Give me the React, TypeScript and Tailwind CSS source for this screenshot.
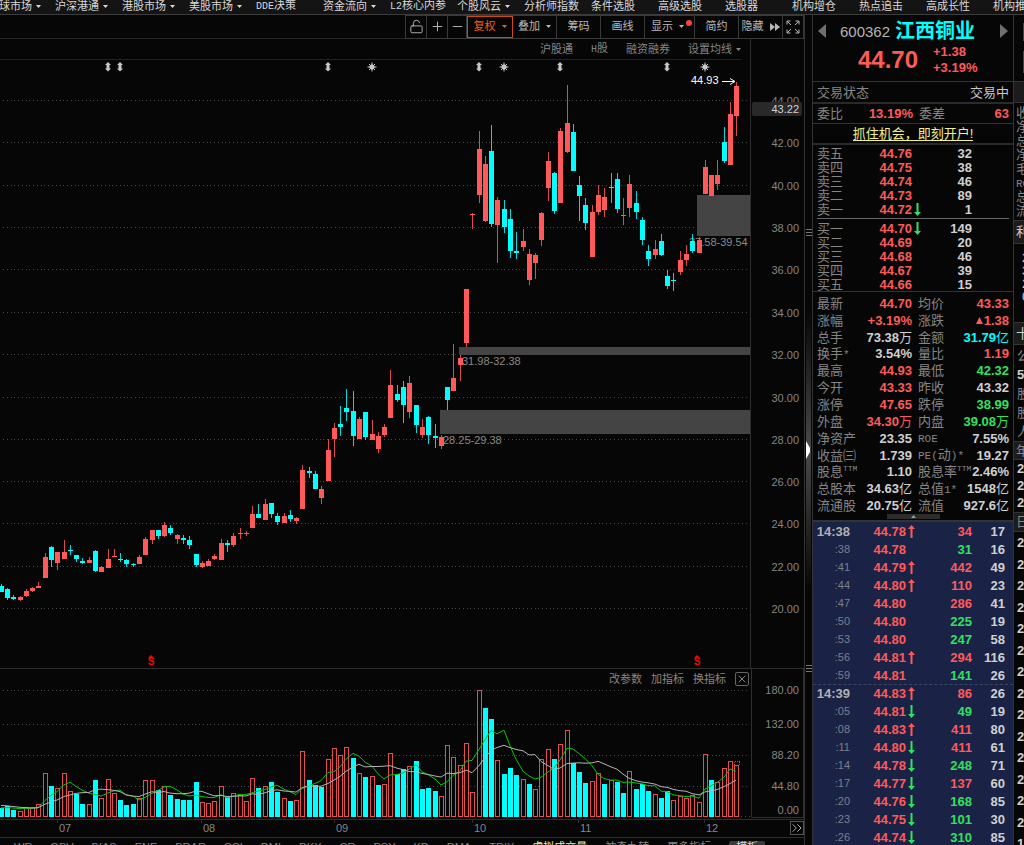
import { useState } from 'react';
import clsx from 'clsx';
import { ChevronsRight, Minus, Plus, LockOpen, X } from 'lucide-react';

type Color = 'r' | 'c' | 'g' | 'w' | 'b';

const RED = '#ff5a5a';
const CYAN = '#00ffff';

// candle colour, high, body top, body bottom, low, volume colour, volume top
type Candle = [string, number, number, number, number, string, number];

const CANDLES: Candle[] = [
  ['c', 584, 586, 592, 592, 'c', 808], ['c', 588, 589, 598, 600, 'c', 806], ['c', 595, 597, 599, 600, 'c', 810],
  ['r', 596, 597, 600, 601, 'r', 811], ['r', 589, 591, 596, 597, 'r', 807], ['r', 587, 588, 591, 592, 'r', 807],
  ['r', 582, 586, 588, 588, 'r', 804], ['r', 553, 557, 578, 578, 'r', 773], ['c', 546, 547, 560, 567, 'c', 786],
  ['r', 552, 552, 563, 570, 'r', 788], ['r', 540, 552, 559, 559, 'r', 773], ['c', 545, 550, 551, 555, 'r', 791],
  ['c', 555, 555, 559, 562, 'c', 794], ['c', 558, 561, 563, 564, 'c', 804], ['r', 557, 560, 563, 563, 'r', 804],
  ['c', 550, 551, 571, 572, 'c', 780], ['r', 566, 567, 572, 572, 'r', 798], ['r', 549, 559, 568, 568, 'r', 779],
  ['r', 549, 556, 557, 557, 'r', 793], ['c', 553, 559, 560, 562, 'c', 800], ['c', 559, 560, 564, 567, 'c', 805],
  ['c', 563, 564, 565, 567, 'c', 804], ['r', 555, 557, 564, 564, 'r', 798], ['r', 537, 539, 555, 555, 'r', 780],
  ['r', 530, 530, 540, 544, 'r', 780], ['c', 530, 530, 536, 539, 'c', 790], ['r', 522, 525, 536, 537, 'r', 786],
  ['c', 525, 528, 533, 535, 'c', 795], ['r', 534, 535, 539, 544, 'c', 799], ['c', 535, 538, 540, 544, 'c', 800],
  ['c', 536, 540, 545, 549, 'c', 800], ['c', 554, 554, 565, 567, 'c', 782], ['r', 561, 563, 567, 568, 'r', 802],
  ['r', 559, 561, 566, 566, 'r', 803], ['r', 554, 556, 559, 560, 'r', 801], ['r', 539, 543, 560, 560, 'r', 786],
  ['c', 540, 543, 545, 552, 'c', 797], ['r', 533, 536, 545, 547, 'r', 793], ['r', 528, 533, 534, 539, 'r', 795],
  ['r', 531, 533, 534, 536, 'r', 801], ['r', 506, 514, 528, 528, 'r', 778], ['c', 504, 514, 518, 518, 'c', 788],
  ['r', 499, 504, 520, 520, 'r', 786], ['c', 503, 503, 514, 518, 'c', 782], ['c', 513, 516, 522, 525, 'c', 792],
  ['r', 513, 516, 523, 523, 'r', 798], ['c', 510, 515, 519, 522, 'c', 801], ['r', 517, 518, 521, 524, 'r', 800],
  ['r', 465, 470, 509, 509, 'r', 751], ['c', 467, 471, 473, 478, 'c', 780], ['c', 471, 474, 489, 489, 'c', 785],
  ['r', 486, 489, 498, 504, 'c', 787], ['r', 439, 450, 481, 481, 'r', 759], ['r', 423, 428, 439, 457, 'r', 748],
  ['c', 406, 424, 427, 436, 'r', 755], ['c', 389, 408, 412, 421, 'r', 747], ['c', 391, 411, 436, 446, 'c', 758],
  ['r', 417, 419, 439, 439, 'r', 773], ['c', 412, 412, 437, 440, 'c', 777], ['r', 420, 434, 440, 440, 'r', 776],
  ['r', 432, 436, 449, 453, 'c', 785], ['r', 424, 427, 435, 437, 'r', 784], ['r', 370, 385, 418, 418, 'r', 753],
  ['c', 385, 394, 400, 402, 'c', 774], ['c', 381, 387, 405, 423, 'c', 769], ['r', 376, 383, 412, 418, 'r', 766],
  ['c', 405, 405, 425, 433, 'c', 761], ['r', 419, 427, 435, 438, 'c', 789], ['c', 416, 417, 435, 444, 'c', 788],
  ['c', 424, 436, 438, 448, 'c', 791], ['r', 435, 437, 446, 449, 'r', 796], ['c', 387, 387, 400, 410, 'r', 745],
  ['r', 344, 378, 391, 391, 'r', 757], ['r', 355, 358, 365, 381, 'r', 765], ['r', 289, 289, 343, 347, 'r', 743],
  ['r', 213, 214, 215, 229, 'r', 792], ['r', 131, 149, 195, 203, 'r', 690], ['r', 156, 164, 221, 222, 'c', 708],
  ['c', 125, 151, 224, 227, 'c', 719], ['r', 197, 200, 225, 263, 'r', 760], ['c', 200, 209, 227, 233, 'c', 774],
  ['c', 209, 219, 251, 258, 'c', 768], ['c', 232, 251, 253, 259, 'c', 775], ['r', 229, 241, 247, 251, 'r', 779],
  ['r', 249, 254, 280, 285, 'c', 784], ['r', 253, 255, 263, 279, 'r', 789], ['r', 212, 213, 240, 246, 'r', 759],
  ['r', 152, 161, 188, 201, 'r', 749], ['c', 172, 173, 211, 214, 'c', 759], ['r', 128, 131, 203, 203, 'r', 744],
  ['r', 85, 123, 152, 153, 'r', 730], ['c', 124, 132, 171, 171, 'c', 763], ['c', 176, 185, 196, 221, 'c', 772],
  ['c', 198, 205, 223, 230, 'c', 783], ['r', 205, 212, 257, 257, 'r', 781], ['r', 185, 195, 212, 215, 'r', 773],
  ['r', 188, 197, 210, 217, 'c', 784], ['c', 173, 187, 188, 203, 'r', 780], ['c', 173, 179, 209, 213, 'c', 782],
  ['r', 198, 215, 216, 225, 'c', 793], ['r', 175, 184, 208, 217, 'r', 771], ['c', 191, 203, 212, 219, 'c', 789],
  ['c', 217, 220, 240, 245, 'c', 784], ['c', 245, 251, 259, 266, 'c', 791], ['r', 240, 249, 255, 259, 'r', 794],
  ['c', 234, 241, 255, 256, 'c', 798], ['c', 270, 276, 286, 289, 'c', 791], ['c', 273, 280, 281, 291, 'r', 800],
  ['r', 251, 260, 272, 275, 'r', 796], ['r', 245, 254, 260, 266, 'r', 798], ['c', 234, 241, 251, 253, 'r', 795],
  ['r', 237, 240, 253, 253, 'r', 802], ['r', 160, 167, 194, 194, 'r', 754], ['r', 175, 175, 196, 196, 'c', 780],
  ['r', 160, 175, 184, 190, 'r', 782], ['c', 127, 142, 161, 163, 'r', 768], ['r', 102, 114, 165, 165, 'r', 761],
  ['r', 82, 86, 116, 136, 'r', 765],
];

const candleX = (i: number) => Math.round(0.7 + i * 6.287);

const SEED = [803, 803, 803, 803, 803, 808, 808, 808, 808];

function averageLine(days: number) {
  const tops = [...SEED, ...CANDLES.map(c => c[6])];
  return CANDLES.map((_, i) => {
    const end = i + SEED.length + 1;
    const sum = tops.slice(end - days, end).reduce((a, b) => a + b, 0);
    return `${candleX(i)},${(sum / days).toFixed(1)}`;
  }).join(' ');
}

const PRICE_GRID: [number, string][] = [
  [101, '44.00'], [143, '42.00'], [186, '40.00'], [228, '38.00'], [270, '36.00'], [313, '34.00'], [355, '32.00'],
  [398, '30.00'], [440, '28.00'], [482, '26.00'], [524, '24.00'], [567, '22.00'], [609, '20.00'],
];

const VOLUME_GRID: [number, string][] = [[690, '180.00'], [724, '132.00'], [755, '88.20'], [786, '44.80']];

const GAPS: [number, number, number, number, string, number][] = [
  [459, 347, 291, 8, '31.98-32.38', 462],
  [440, 410, 310, 24, '28.25-29.38', 443],
  [697, 195, 53, 41, '37.58-39.54', 689],
];

const MONTHS: [number, string][] = [[57, '07'], [201, '08'], [334, '09'], [472, '10'], [578, '11'], [704, '12']];

const MENU: [string, boolean][] = [
  ['全球市场', true], ['沪深港通', true], ['港股市场', true], ['美股市场', true], ['DDE决策', false],
  ['资金流向', true], ['L2核心内参', false], ['个股风云', true], ['分析师指数', false], ['条件选股', false],
  ['高级选股', false], ['选股器', false], ['机构增仓', false], ['热点追击', false], ['高成长性', false], ['机构推荐', false],
];

const INDICATORS = ['WR', 'OBV', 'BIAS', 'ENE', 'BRAR', 'CCI', 'DMI', 'DKX', 'CR', 'PSY', 'KD', 'DMA', 'TRIX'];

const ASKS: [string, string, string][] = [
  ['卖五', '44.76', '32'], ['卖四', '44.75', '38'], ['卖三', '44.74', '46'], ['卖二', '44.73', '89'], ['卖一', '44.72', '1'],
];
const BIDS: [string, string, string][] = [
  ['买一', '44.70', '149'], ['买二', '44.69', '20'], ['买三', '44.68', '46'], ['买四', '44.67', '39'], ['买五', '44.66', '15'],
];

const STATS: [string, string, Color, string, string, Color][] = [
  ['最新', '44.70', 'r', '均价', '43.33', 'r'],
  ['涨幅', '+3.19%', 'r', '涨跌', '▲1.38', 'r'],
  ['总手', '73.38万', 'w', '金额', '31.79亿', 'b'],
  ['换手*', '3.54%', 'w', '量比', '1.19', 'r'],
  ['最高', '44.93', 'r', '最低', '42.32', 'g'],
  ['今开', '43.33', 'r', '昨收', '43.32', 'w'],
  ['涨停', '47.65', 'r', '跌停', '38.99', 'g'],
  ['外盘', '34.30万', 'r', '内盘', '39.08万', 'g'],
  ['净资产', '23.35', 'w', 'ROE', '7.55%', 'w'],
  ['收益㈢', '1.739', 'w', 'PE(动)*', '19.27', 'w'],
  ['股息TTM', '1.10', 'w', '股息率TTM', '2.46%', 'w'],
  ['总股本', '34.63亿', 'w', '总值1*', '1548亿', 'w'],
  ['流通股', '20.75亿', 'w', '流值', '927.6亿', 'w'],
];

// time, price, direction, volume, volume colour, count
const TICKS: [string, string, string, string, Color, string][] = [
  ['14:38', '44.78', 'up', '34', 'r', '17'], [':38', '44.78', '', '31', 'g', '16'],
  [':41', '44.79', 'up', '442', 'r', '49'], [':44', '44.80', 'up', '110', 'r', '23'],
  [':47', '44.80', '', '286', 'r', '41'], [':50', '44.80', '', '225', 'g', '19'],
  [':53', '44.80', '', '247', 'g', '58'], [':56', '44.81', 'up', '294', 'r', '116'],
  [':59', '44.81', '', '141', 'g', '26'], ['14:39', '44.83', 'up', '86', 'r', '26'],
  [':05', '44.81', 'down', '49', 'g', '19'], [':08', '44.83', 'up', '411', 'r', '80'],
  [':11', '44.80', 'down', '411', 'r', '61'], [':14', '44.78', 'down', '248', 'g', '71'],
  [':17', '44.77', 'down', '137', 'r', '60'], [':20', '44.76', 'down', '168', 'g', '85'],
  [':23', '44.75', 'down', '101', 'g', '30'], [':26', '44.74', 'down', '310', 'g', '85'],
];

const textColor: Record<Color, string> = {
  r: 'text-[#ff5a5a]',
  c: 'text-[#00ffff]',
  g: 'text-[#33e060]',
  w: 'text-[#d0d0d0]',
  b: 'text-[#00ffff]',
};

function Caret({ className }: { className?: string }) {
  return (
    <svg viewBox="0 0 5 3" className={clsx('h-[3px] w-[5px] shrink-0 fill-current', className)}>
      <path d="M0 0h5L2.5 3z" />
    </svg>
  );
}

function TradeArrow({ direction }: { direction: string }) {
  return (
    <svg viewBox="0 0 7 13" className={clsx('h-[13px] w-[7px] shrink-0', direction === 'up' ? 'fill-[#ff5a5a]' : 'fill-[#33e060]')}>
      {direction === 'up' && <path d="M3.5 0 7 4H4.500V13h-2V4H0z" />}
      {direction === 'down' && <path d="M3.500 13 7 9H4.500V0h-2v9H0z" />}
    </svg>
  );
}

// Latin runs inside a Chinese label are set in the half-width face
function Mixed({ text, latinClass }: { text: string; latinClass: string }) {
  return text.split(/([\x21-\x7e]+)/).map((part, i) => (
    i % 2 ? <span key={i} className={clsx("font-['Liberation_Mono',monospace]", latinClass)}>{part}</span> : part
  ));
}

// Digits are bold, a trailing unit such as 万 or 亿 stays regular
function Value({ text }: { text: string }) {
  const unit = text.match(/[万亿]$/)?.[0] ?? '';
  const rest = unit ? text.slice(0, -1) : text;
  if (rest.startsWith('▲')) {
    return (
      <span className="flex items-center font-bold">
        <svg viewBox="0 0 7 7" className="mr-px h-[7px] w-[7px] fill-current"><path d="M3.500 0 7 7H0z" /></svg>
        {rest.slice(1)}
      </span>
    );
  }
  return <span><b>{rest}</b>{unit}</span>;
}

function StatLabel({ text }: { text: string }) {
  const hasTtm = text.endsWith('TTM');
  return (
    <span className="flex items-center whitespace-nowrap text-[#858585]">
      <span><Mixed text={hasTtm ? text.slice(0, -3) : text} latinClass="text-[11px]" /></span>
      {hasTtm && <sup className="top-0 self-start font-['Liberation_Mono',monospace] text-[8px] leading-[8px]">TTM</sup>}
    </span>
  );
}

function EventMark({ x }: { x: number }) {
  return <path d={`M${x} 62l3 3h-1.500v3.500H${x + 3}l-3 3-3-3h1.500V65h-1.500z`} fill="#c8c8c8" />;
}

function StarMark({ x }: { x: number }) {
  return (
    <g stroke="#c8c8c8" strokeWidth="1">
      <circle cx={x} cy="67" r="2.200" fill="#c8c8c8" />
      <path d={`M${x} 62.500v9M${x - 4.500} 67h9M${x - 3} 64l6 6M${x + 3} 64l-6 6`} />
    </g>
  );
}

function PriceChart() {
  return (
    <svg viewBox="0 60 804 608" className="block h-auto w-full font-['Liberation_Sans',sans-serif] text-[11px]">
      <g stroke="#484848" strokeDasharray="1 2.770" shapeRendering="crispEdges">
        {PRICE_GRID.map(([y]) => <path key={y} d={`M3 ${y - 0.5}H749`} />)}
      </g>
      <path d="M750.500 60V668" stroke="#2e2e2e" />
      {PRICE_GRID.map(([y, label]) => (
        <text key={label} x="799" y={y + 4} textAnchor="end" fill="#858585">{label}</text>
      ))}
      <rect x="752" y="102" width="50" height="14" rx="2" fill="#292929" />
      <text x="799" y="113" textAnchor="end" fill="#d0d0d0">43.22</text>

      {GAPS.map(([x, y, w, h, label, labelX]) => (
        <g key={label}>
          <rect x={x} y={y} width={w} height={h} fill="#444444" />
          <text x={labelX} y={y + h + 10} fill="#8a8a8a">{label}</text>
        </g>
      ))}

      <g shapeRendering="crispEdges">
        {CANDLES.map(([color, high, top, bottom, low], i) => {
          const x = candleX(i);
          const fill = color === 'r' ? RED : CYAN;
          return (
            <g key={i} fill={fill}>
              <rect x={x} y={high} width="1" height={low - high} opacity="0.850" />
              <rect x={x - 2} y={top} width="5" height={bottom - top} />
            </g>
          );
        })}
      </g>

      {[108, 120, 328, 479, 560, 667].map(x => <EventMark key={x} x={x} />)}
      {[372, 504, 705].map(x => <StarMark key={x} x={x} />)}

      <text x="691" y="84" fill="#ffffff">44.93</text>
      <path d="M722 81.500h12M730 78.500l5 3-5 3" stroke="#ffffff" fill="none" />

      {[151, 697].map(x => (
        <g key={x} fill="#ff0000">
          <path d={`M${x} 655l3 3h-6z`} />
          <text x={x} y="665" textAnchor="middle" className="text-[10px] font-bold">S</text>
        </g>
      ))}
    </svg>
  );
}

function VolumeChart() {
  return (
    <svg viewBox="0 668 804 170" className="block h-auto w-full font-['Liberation_Sans',sans-serif] text-[11px]">
      <g stroke="#2e2e2e" fill="none" shapeRendering="crispEdges">
        <path d="M0 668.500H804M751.500 669V817.500H803.500V669M0 819.500H804M0 837.500H804" />
        {MONTHS.map(([x]) => <path key={x} d={`M${x + 0.5} 819v4`} />)}
      </g>
      <g stroke="#484848" strokeDasharray="1 2.770" shapeRendering="crispEdges">
        {VOLUME_GRID.map(([y]) => <path key={y} d={`M3 ${y + 0.5}H749`} />)}
        <path d="M741 816.500H750" />
      </g>
      {VOLUME_GRID.map(([y, label]) => (
        <text key={label} x="799" y={y + 4} textAnchor="end" fill="#858585">{label}</text>
      ))}
      <text x="799" y="814" textAnchor="end" fill="#858585">0.00</text>
      {MONTHS.map(([x, label]) => (
        <text key={label} x={x + 2} y="832" fill="#858585">{label}</text>
      ))}

      <g shapeRendering="crispEdges">
        {CANDLES.map((candle, i) => {
          const x = candleX(i) - 2;
          const top = candle[6];
          return candle[5] === 'c'
            ? <rect key={i} x={x} y={top} width="5" height={817 - top} fill={CYAN} />
            : <rect key={i} x={x + 0.5} y={top + 0.5} width="4" height={816 - top} fill="#060606" stroke="#e05050" />;
        })}
        <path d="M734.500 765v-4h5v4" stroke="#b05020" strokeDasharray="1 1" fill="none" />
      </g>
      <polyline points={averageLine(5)} fill="none" stroke="#00c800" />
      <polyline points={averageLine(10)} fill="none" stroke="#b4b4b4" />
    </svg>
  );
}

function Toolbar() {
  const [adjusted, setAdjusted] = useState(true);
  const cell = 'flex h-[22px] shrink-0 items-center justify-center gap-[6px] border-r border-[#3a3a3a]';
  return (
    <div className="flex h-6 items-center justify-end border-b border-[#262626]">
      <div className="flex border-y border-l border-[#3a3a3a] text-[#b8b8b8]">
        <button aria-label="锁定" className={clsx(cell, 'w-[21px]')}><LockOpen size={15} strokeWidth={1.5} /></button>
        <button aria-label="放大" className={clsx(cell, 'w-[21px]')}><Plus size={15} strokeWidth={1.5} /></button>
        <button aria-label="缩小" className={clsx(cell, 'w-[19px]')}><Minus size={15} strokeWidth={1.5} /></button>
        <button
          onClick={() => setAdjusted(!adjusted)}
          className={clsx('flex h-[22px] w-[46px] items-center justify-center gap-[6px] border', adjusted ? 'border-[#d04a00] text-[#ff5a14]' : 'border-[#3a3a3a]')}
        >
          复权<Caret />
        </button>
        <button className={clsx(cell, 'w-[44px]')}>叠加<Caret /></button>
        <button className={clsx(cell, 'w-[44px]')}>筹码</button>
        <button className={clsx(cell, 'w-[44px]')}>画线</button>
        <button className={clsx(cell, 'relative w-[50px] pr-1')}>
          显示<Caret />
          <span className="absolute top-1 right-[2px] h-[6px] w-[6px] rounded-full bg-[#ff4238]" />
        </button>
        <button className={clsx(cell, 'w-[44px]')}>简约</button>
        <button className={clsx(cell, 'w-[44px] gap-[3px]')}>
          隐藏
          <svg viewBox="0 0 10 8" className="h-2 w-[10px] fill-current"><path d="M0 0l5 4-5 4zM5 0l5 4-5 4z" /></svg>
        </button>
        <button aria-label="全屏" className={clsx(cell, 'w-[21px]')}>
          <svg viewBox="0 0 14 14" className="h-[14px] w-[14px] fill-none stroke-current">
            <path d="M1 4.500V1h3.500M9.500 1H13v3.500M13 9.500V13H9.500M4.500 13H1V9.500M1 1l4 4M13 1 9 5M13 13 9 9M1 13l4-4" />
          </svg>
        </button>
      </div>
    </div>
  );
}

function OrderRow({ row, arrow }: { row: [string, string, string]; arrow?: boolean }) {
  return (
    <div className="flex h-[14px] items-center">
      <span className="w-[40px] text-[#858585]">{row[0]}</span>
      <b className="w-[55px] text-right text-[#ff5a5a]">{row[1]}</b>
      <span className="w-[10px] pl-[2px]">{arrow && <TradeArrow direction="down" />}</span>
      <b className="w-[50px] text-right text-[#d0d0d0]">{row[2]}</b>
    </div>
  );
}

function QuotePanel() {
  return (
    <aside className="w-[202px] shrink-0 border-x border-[#333] text-[13px] leading-none">
      <div className="h-[67px] border-b border-[#333] px-[5px] pt-[6px]">
        <div className="flex h-5 items-center">
          <button aria-label="上一只"><svg viewBox="0 0 8 14" className="h-[14px] w-2 fill-[#707070]"><path d="M8 0v14L0 7z" /></svg></button>
          <h1 className="flex flex-1 items-center gap-[5px] pl-[14px] whitespace-nowrap">
            <span className="text-[15px] text-[#b4b4b4]">600362</span>
            <span className="text-[20px] font-bold text-[#00ffff]">江西铜业</span>
          </h1>
          <button aria-label="下一只"><svg viewBox="0 0 8 14" className="h-[14px] w-2 fill-[#707070]"><path d="M0 0v14l8-7z" /></svg></button>
        </div>
        <div className="mt-[3px] flex items-center pl-[40px] text-[#ff5a5a]">
          <span className="w-[75px] text-[24px] font-bold">44.70</span>
          <span className="flex flex-col font-bold leading-4">
            <span>+1.38</span>
            <span>+3.19%</span>
          </span>
        </div>
      </div>
      <div className="flex h-[22px] items-center justify-between border-b-2 border-[#2a2a2a] px-1">
        <span className="text-[#858585]">交易状态</span>
        <span className="text-[#c8c8c8]">交易中</span>
      </div>
      <div className="flex h-5 items-center border-b border-[#333] pr-1 pl-1">
        <span className="text-[#858585]">委比</span>
        <b className="flex-1 pr-[6px] text-right text-[#ff5a5a]">13.19%</b>
        <span className="text-[#858585]">委差</span>
        <b className="w-[64px] text-right text-[#ff5a5a]">63</b>
      </div>
      <div className="flex h-[21px] items-center justify-center border-b-2 border-[#2a2a2a]">
        <a href="#open" className="border-b border-[#f0f090] text-[13px] text-[#f0f090]">抓住机会，即刻开户!</a>
      </div>
      <div className="border-b border-[#333] pt-px pr-1 pl-1">
        {ASKS.map((row, i) => <OrderRow key={row[0]} row={row} arrow={i === 4} />)}
        <div className="my-[2px] border-b border-[#666]" />
        {BIDS.map((row, i) => <OrderRow key={row[0]} row={row} arrow={i === 0} />)}
      </div>
      <dl className="grid h-[222px] auto-rows-fr pt-[3px] pr-1 pl-1">
        {STATS.map(([label, value, color, label2, value2, color2]) => (
          <div key={label} className="grid grid-cols-[95px_1fr] items-center gap-[6px]">
            <div className="flex items-center justify-between">
              <dt><StatLabel text={label} /></dt>
              <dd className={textColor[color]}><Value text={value} /></dd>
            </div>
            <div className="flex items-center justify-between">
              <dt><StatLabel text={label2} /></dt>
              <dd className={textColor[color2]}><Value text={value2} /></dd>
            </div>
          </div>
        ))}
      </dl>
      <button aria-label="收起" className="mx-auto flex h-[5px] w-[53px] items-center justify-center bg-[#2c2c2c] text-[#999]">
        <Caret className="rotate-180" />
      </button>
      <div className="mt-px border-t-2 border-[#333] bg-[#1a2346]">
        {TICKS.map(([time, price, direction, volume, color, count], i) => (
          <div key={time + i} className={clsx('flex h-[18px] items-center', i === 9 && 'border-t border-dashed border-[#3c4660]')}>
            <span className={clsx('w-[37px] text-right', time.length > 3 ? 'font-bold text-[#b0b0b0]' : 'text-[11px] text-[#7c7f8c]')}>{time}</span>
            <b className="w-[56px] text-right text-[#ff5a5a]">{price}</b>
            <span className="w-[9px] pl-[2px]"><TradeArrow direction={direction} /></span>
            <b className={clsx('w-[57px] text-right', textColor[color])}>{volume}</b>
            <b className="w-[33px] text-right text-[#d0d0d0]">{count}</b>
          </div>
        ))}
      </div>
    </aside>
  );
}

function SideStrip() {
  const head = 'shrink-0 border-y border-[#333] bg-[#1c1c1c] pl-[2px]';
  return (
    <aside className="flex w-[10px] shrink-0 flex-col overflow-hidden whitespace-nowrap text-[13px] text-[#858585]">
      <div className="flex h-[66px] shrink-0 flex-col items-end gap-[10px] pt-2">
        <span className="h-[18px] w-px bg-[#444]" />
        <span className="h-[22px] w-px bg-[#444]" />
      </div>
      <div className={clsx(head, 'h-[22px]')} />
      <div className="h-[117px] shrink-0 pt-[3px] pl-[2px] leading-[14px]">
        {['收入', '净利', '总资', '净资', '毛利', 'ROE', '总股', '流通'].map(t => (
          <div key={t} className="h-[14px]"><Mixed text={t} latinClass="text-[11px]" /></div>
        ))}
      </div>
      <div className={clsx(head, 'h-6 leading-[22px] text-[#d0d0d0]')}>利润</div>
      <div className="h-[78px] shrink-0 pt-[7px] pl-[8px] leading-[13px] text-[#d0d0d0]">
        {['2', '3', '2', '0'].map((t, i) => <div key={i} className="h-[13px]">{t}</div>)}
      </div>
      <div className={clsx(head, 'h-[23px] leading-[21px] text-[#d0d0d0]')}>十大</div>
      <div className="shrink-0 pt-px pl-[3px] leading-[19px]">
        <div>公司</div>
        <b className="block text-[#d0d0d0]">5</b>
        <div>股东</div>
        <div>股本</div>
        <div>人均</div>
      </div>
      <div className={clsx(head, 'h-[19px] leading-[17px]')}>年度</div>
      <div className="h-[52px] shrink-0 pl-[3px] leading-[17px] text-[#d0d0d0]">
        {[0, 1, 2].map(i => <b key={i} className="block">2</b>)}
      </div>
      <div className={clsx(head, 'h-[20px] leading-[18px]')}>日期</div>
      <div className="grid h-[301px] shrink-0 auto-rows-fr items-center pl-[3px] text-[#d0d0d0]">
        {Array.from({ length: 14 }, (_, i) => <b key={i} className="leading-none">2</b>)}
      </div>
      <b className="shrink-0 pl-[3px] leading-[21px] text-[#d0d0d0]">1</b>
    </aside>
  );
}

function Grip() {
  return (
    <svg viewBox="0 0 6 8" className="h-2 w-[6px] stroke-[#777]">
      <path d="M0 1.500h6M0 4.500h6M0 7.500h6" />
    </svg>
  );
}

export default function App() {
  return (
    <div className="flex h-screen flex-col overflow-hidden bg-[#060606] font-['Liberation_Sans','Noto_Sans_CJK_SC',sans-serif] text-[11px] leading-none text-[#858585]">
      <nav className="h-[15px] shrink-0 overflow-hidden border-b border-[#3c3c3c] bg-[#141414]">
        <div className="-ml-3 flex h-3 items-center text-[#d8d8d8]">
          {MENU.map(([label, caret]) => (
            <a key={label} href="#menu" className="flex w-[67px] shrink-0 items-center gap-1 whitespace-nowrap">
              <span><Mixed text={label} latinClass="text-[10px]" /></span>{caret && <Caret />}
            </a>
          ))}
        </div>
      </nav>

      <div className="flex min-h-0 flex-1">
        <main className="min-w-0 flex-1">
          <Toolbar />
          <div className="flex h-[21px]">
            <div className="flex-1 border-r border-[#2e2e2e] pr-[9px]">
              <div className="flex h-full items-center justify-end gap-[18px] border-b border-[#222]">
                <button>沪股通</button>
                <button><Mixed text="H股" latinClass="text-[10px]" /></button>
                <button>融资融券</button>
                <button className="flex items-center gap-1">设置均线<Caret /></button>
              </div>
            </div>
            <div className="w-[53px]" />
          </div>
          <PriceChart />
          <section className="relative">
            <VolumeChart />
            <div className="absolute top-1 right-[55px] flex items-center gap-[9px]">
              <button>改参数</button>
              <button>加指标</button>
              <button>换指标</button>
              <button aria-label="关闭" className="flex h-[14px] w-[14px] items-center justify-center rounded-[2px] border border-[#666]">
                <X size={12} strokeWidth={2} />
              </button>
            </div>
            <button aria-label="展开" className="absolute right-0 bottom-[3px] flex h-[14px] w-[14px] items-center justify-center border border-[#555] text-[#aaa]">
              <ChevronsRight size={16} strokeWidth={1.5} className="shrink-0" />
            </button>
          </section>
          <div className="flex h-[18px] items-center gap-[18px] pl-[14px] whitespace-nowrap">
            {INDICATORS.map(name => <button key={name}>{name}</button>)}
            <button className="text-[#f0f090]">虚拟成交量</button>
            <button>神奇九转</button>
            <button>更多指标</button>
            <button className="rounded-t-[2px] bg-[#3a3a3a] px-[7px] py-px text-[#d8d8d8]">模板</button>
          </div>
        </main>

        <div className="flex w-2 shrink-0 flex-col items-center border-l border-[#333] pt-[213px]">
          <Grip />
          <div className="mt-[74px] flex h-[280px] w-[5px] items-center bg-linear-to-b from-transparent via-[#4a4a4a] to-transparent">
            <svg viewBox="0 0 4 18" className="h-[18px] w-1 fill-white"><path d="M0 0l4 7v4l-4 7z" /></svg>
          </div>
          <div className="mt-[74px]"><Grip /></div>
        </div>

        <QuotePanel />
        <SideStrip />
      </div>
    </div>
  );
}
